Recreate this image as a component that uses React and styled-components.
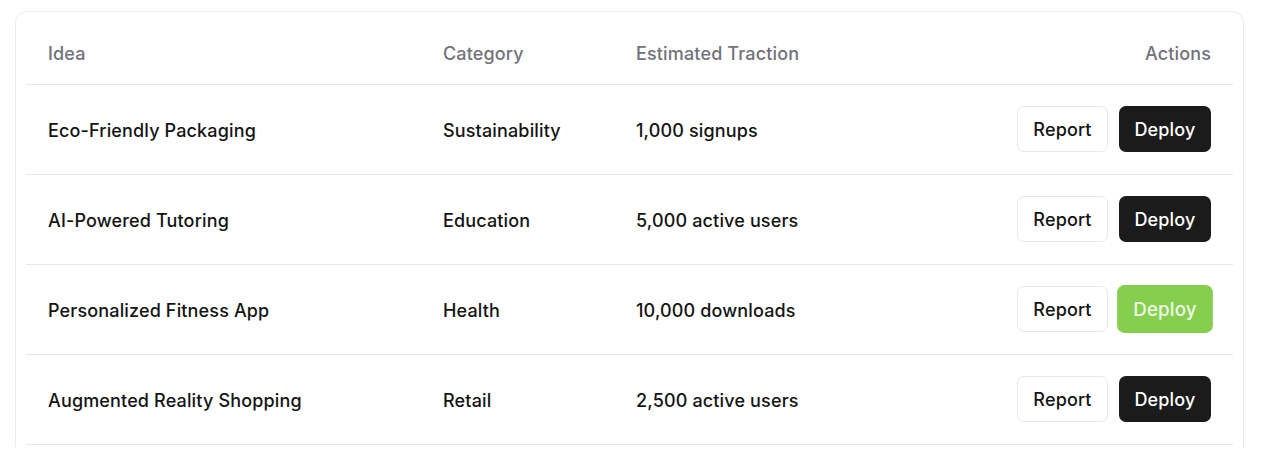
import React from "react";
import styled, { createGlobalStyle } from "styled-components";

const GlobalStyle = createGlobalStyle`
  * { box-sizing: border-box; }
  body {
    margin: 0;
    background: #ffffff;
    font-family: Inter, "Noto Sans", Arial, sans-serif;
    -webkit-font-smoothing: antialiased;
  }
`;

const ideas = [
  { name: "Eco-Friendly Packaging", category: "Sustainability", traction: "1,000 signups" },
  { name: "AI-Powered Tutoring", category: "Education", traction: "5,000 active users" },
  { name: "Personalized Fitness App", category: "Health", traction: "10,000 downloads", hovered: true },
  { name: "Augmented Reality Shopping", category: "Retail", traction: "2,500 active users" },
];

const App = () => {
  return (
    <>
      <GlobalStyle />
      <Page>
        <Card>
          <Table>
            <colgroup>
              <col style={{ width: 395 }} />
              <col style={{ width: 193 }} />
              <col />
              <col />
            </colgroup>
            <thead>
              <tr>
                <HeadCell>Idea</HeadCell>
                <HeadCell>Category</HeadCell>
                <HeadCell>Estimated Traction</HeadCell>
                <HeadCell $right>Actions</HeadCell>
              </tr>
            </thead>
            <tbody>
              {ideas.map((idea) => (
                <Row key={idea.name}>
                  <Cell>{idea.name}</Cell>
                  <Cell>{idea.category}</Cell>
                  <Cell>{idea.traction}</Cell>
                  <Cell $right>
                    <Actions>
                      <ReportButton>Report</ReportButton>
                      <DeployButton $hovered={idea.hovered}>Deploy</DeployButton>
                    </Actions>
                  </Cell>
                </Row>
              ))}
            </tbody>
          </Table>
        </Card>
      </Page>
    </>
  );
};

export default App;

const Page = styled.div`
  padding: 11px 20px 0 15px;
`;

const Card = styled.div`
  border: 1px solid #ececec;
  border-bottom: none;
  border-radius: 12px 12px 0 0;
  padding: 10px 10px 2px;
  background: #fff;
`;

const Table = styled.table`
  width: 100%;
  border-collapse: collapse;
  table-layout: fixed;
`;

const HeadCell = styled.th`
  height: 62px;
  padding: 2px 22px 0;
  text-align: ${(p) => (p.$right ? "right" : "left")};
  font-size: 18px;
  letter-spacing: 0.15px;
  font-weight: 500;
  color: #72727a;
  border-bottom: 1px solid #e7e7e7;
  vertical-align: middle;
`;

const Row = styled.tr`
  border-bottom: 1px solid #e7e7e7;
`;

const Cell = styled.td`
  height: 90px;
  padding: 2px 22px 0;
  text-align: ${(p) => (p.$right ? "right" : "left")};
  font-size: 18px;
  letter-spacing: 0.15px;
  font-weight: 500;
  color: #141414;
  vertical-align: middle;
`;

const Actions = styled.div`
  display: flex;
  justify-content: flex-end;
  align-items: center;
  gap: 11px;
  margin-top: -2px;
`;

const BaseButton = styled.button`
  height: 46px;
  padding: 0 12px;
  border-radius: 7px;
  font-family: inherit;
  font-size: 18px;
  letter-spacing: 0.15px;
  font-weight: 500;
  cursor: pointer;
`;

const ReportButton = styled(BaseButton)`
  width: 91px;
  background: #fff;
  color: #141414;
  border: 1px solid #e8e8e8;
`;

const DeployButton = styled(BaseButton)`
  width: 92px;
  border: none;
  background: ${(p) => (p.$hovered ? "#86cf4e" : "#1b1b1c")};
  color: ${(p) => (p.$hovered ? "#eef8e8" : "#ffffff")};
  transform: ${(p) => (p.$hovered ? "scale(1.04)" : "none")};
`;
